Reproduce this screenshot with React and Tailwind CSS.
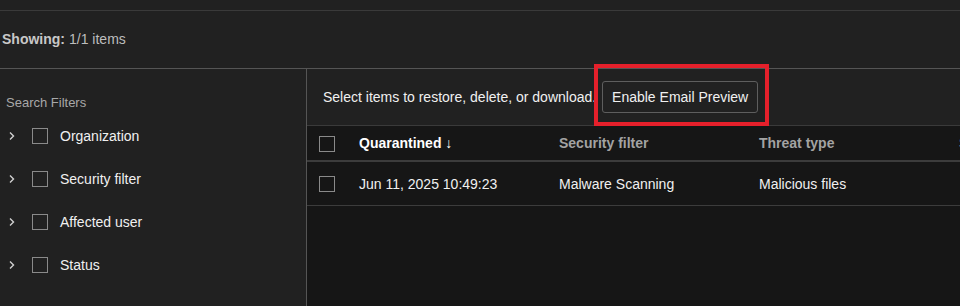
import React from "react";

const Chevron = () => (
  <svg width="8" height="10" viewBox="0 0 8 10" className="text-[#d0d0d0]">
    <path d="M2 1.5 L5.5 5 L2 8.5" fill="none" stroke="currentColor" strokeWidth="1.4" />
  </svg>
);

const Box = () => <span className="block h-4 w-4 border border-[#8a8a8a]" />;

const filters = ["Organization", "Security filter", "Affected user", "Status"];

export default function App() {
  return (
    <div className="relative flex h-[306px] w-[960px] flex-col overflow-hidden bg-[#212121] text-[#e6e6e6] font-['Liberation_Sans',Arial,sans-serif]">
      {/* top strip */}
      <div className="h-[11px] border-b border-[#3a3a3a]" />

      {/* summary */}
      <div className="flex h-[57px] items-center pl-[2px] text-[14px] text-[#bdbdbd]">
        <span className="font-bold text-[#c8c8c8]">Showing:</span>
        <span className="ml-1">1/1 items</span>
      </div>

      <div className="flex flex-1 border-t border-[#555]">
        {/* filters */}
        <aside className="w-[307px] shrink-0 border-r border-[#555] pt-[24px]">
          <div className="pl-[6px] text-[13px] text-[#a8a8a8]">Search Filters</div>
          <ul className="mt-[2px] flex flex-col">
            {filters.map((f) => (
              <li key={f} className="flex h-[43px] items-center">
                <span className="ml-[8px] flex w-[24px]">
                  <Chevron />
                </span>
                <Box />
                <span className="ml-[12px] text-[14px] text-[#f0f0f0]">{f}</span>
              </li>
            ))}
          </ul>
        </aside>

        {/* results */}
        <section className="flex flex-1 flex-col">
          <div className="flex h-[57px] items-center border-b border-[#3a3a3a] pl-4 text-[14px] text-[#f0f0f0]">
            <span>Select items to restore, delete, or download.</span>
            <button className="ml-[6px] h-[32px] w-[156px] rounded-[3px] border border-[#5e5e5e] text-[14px] text-[#f0f0f0]">
              Enable Email Preview
            </button>
          </div>
          <div className="flex-1 bg-[#161616]">
            <div className="flex h-[36px] items-center border-b-2 border-[#3c3c3c] pt-[1px] text-[14px] font-semibold">
              <span className="flex w-[52px] pl-3">
                <Box />
              </span>
              <span className="w-[200px] text-white">
                Quarantined <span className="font-normal">↓</span>
              </span>
              <span className="w-[200px] text-[#a3a3a3]">Security filter</span>
              <span className="w-[200px] text-[#a3a3a3]">Threat type</span>
              <span className="text-[#a3a3a3]">S</span>
            </div>
            <div className="flex h-[44px] items-center border-b border-[#3c3c3c] pt-[1px] text-[14px] text-[#f0f0f0]">
              <span className="flex w-[52px] pl-3">
                <Box />
              </span>
              <span className="w-[200px]">Jun 11, 2025 10:49:23</span>
              <span className="w-[200px]">Malware Scanning</span>
              <span className="w-[200px]">Malicious files</span>
            </div>
          </div>
        </section>
      </div>

      {/* annotation highlight */}
      <div className="pointer-events-none absolute left-[594px] top-[64px] h-[62px] w-[175px] border-4 border-[#e5202b]" />
    </div>
  );
}
